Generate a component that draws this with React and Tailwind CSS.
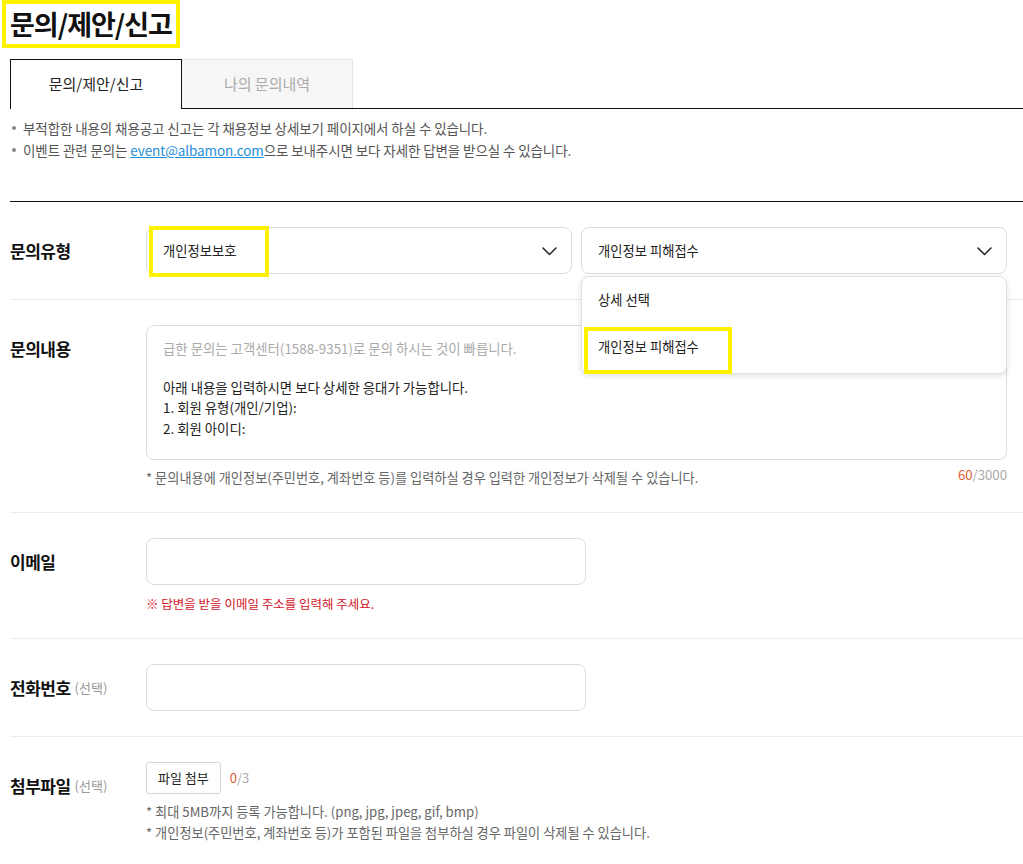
import { useState } from "react";

const FONT = { fontFamily: '"Noto Sans CJK KR", "Noto Sans", sans-serif' };

function Chevron() {
  return (
    <svg width="17" height="16" viewBox="0 0 17 16" fill="none" className="shrink-0">
      <path d="M2 5l6.5 6.5L15 5" stroke="#222" strokeWidth="1.5" strokeLinecap="round" strokeLinejoin="round" />
    </svg>
  );
}

function Label({ children, optional }) {
  return (
    <div className="w-[136px] shrink-0 h-[47px] flex items-center">
      <span className="text-[17px] font-bold text-[#111] tracking-[-0.5px]">{children}</span>
      {optional && <span className="ml-1 text-[13px] text-[#999]">(선택)</span>}
    </div>
  );
}

function Row({ children, last }) {
  return (
    <div className={"flex pt-[25px] " + (last ? "pb-4" : "pb-[25px] border-b border-[#ececec]")}>
      {children}
    </div>
  );
}

export default function App() {
  const [tab] = useState(0);

  return (
    <div className="bg-white min-h-[864px] pl-[10px] text-[#222]" style={FONT}>
      {/* title */}
      <div className="-ml-2">
        <h1 className="inline-block border-[4px] border-[#fff200] px-[4px] pt-[2px] pb-[3px] text-[27px] leading-[35px] font-bold tracking-[-1px] text-[#111]">
          문의/제안/신고
        </h1>
      </div>

      {/* tabs */}
      <div className="flex mt-[11px] h-[50px]">
        <div className={"w-[172px] flex items-center justify-center text-[15px] " + (tab === 0 ? "border border-b-0 border-[#111] bg-white text-[#222]" : "")}>
          문의/제안/신고
        </div>
        <div className="flex-1 flex flex-col">
          <div className="flex-1 flex">
            <div className="w-[171px] flex items-center justify-center text-[15px] text-[#aaa] bg-[#f6f6f6] border border-b-0 border-l-0 border-[#e5e5e5]">
              나의 문의내역
            </div>
          </div>
          <div className="h-px bg-[#111]" />
        </div>
      </div>

      {/* notices */}
      <ul className="mt-[8px] text-[13.5px] leading-[22px] text-[#555] tracking-[-0.1px]">
        <li className="flex items-center">
          <span className="w-[4px] h-[4px] rounded-full bg-[#888] ml-[2px] mr-[7px]" />
          부적합한 내용의 채용공고 신고는 각 채용정보 상세보기 페이지에서 하실 수 있습니다.
        </li>
        <li className="flex items-center">
          <span className="w-[4px] h-[4px] rounded-full bg-[#888] ml-[2px] mr-[7px]" />
          이벤트 관련 문의는&nbsp;<a className="text-[#1e8fd8] underline">event@albamon.com</a>으로 보내주시면 보다 자세한 답변을 받으실 수 있습니다.
        </li>
      </ul>

      <div className="mt-[40px] h-px bg-[#111]" />

      {/* 문의유형 */}
      <Row>
        <Label>문의유형</Label>
        <div className="flex gap-[9px]">
          <div className="relative w-[426px] h-[47px] rounded-[8px] border border-[#dcdcdc] flex items-center justify-between pl-4 pr-[13px]">
            <span className="text-[13.3px]">개인정보보호</span>
            <Chevron />
            <div className="absolute left-[2px] top-[-2px] w-[120px] h-[51px] border-[4px] border-[#fff200]" />
          </div>
          <div className="relative w-[426px] h-[47px] rounded-[8px] border border-[#dcdcdc] flex items-center justify-between pl-4 pr-[13px]">
            <span className="text-[13.3px]">개인정보 피해접수</span>
            <Chevron />
            <div className="absolute left-[-1px] right-[-1px] top-[48px] z-10 bg-white rounded-[8px] border border-[#e2e2e2] shadow-[0_2px_6px_rgba(0,0,0,0.12)] text-[13.3px]">
              <div className="h-[46px] flex items-center pl-4">상세 선택</div>
              <div className="h-[50px] flex items-center pl-4 pb-[2px] relative">
                개인정보 피해접수
                <div className="absolute left-[2px] top-[4px] w-[148px] h-[47px] border-[4px] border-[#fff200]" />
              </div>
            </div>
          </div>
        </div>
      </Row>

      {/* 문의내용 */}
      <Row>
        <Label>문의내용</Label>
        <div className="w-[861px]">
          <div className="h-[135px] rounded-[8px] border border-[#dcdcdc] px-4 pt-[12px] text-[13.4px] leading-[20.5px]">
            <p className="text-[#aaa]">급한 문의는 고객센터(1588-9351)로 문의 하시는 것이 빠릅니다.</p>
            <p className="mt-[18px]">아래 내용을 입력하시면 보다 상세한 응대가 가능합니다.</p>
            <p>1. 회원 유형(개인/기업):</p>
            <p>2. 회원 아이디:</p>
          </div>
          <div className="flex justify-between mt-[9px] text-[13.2px] leading-[18px] text-[#666]">
            <span>* 문의내용에 개인정보(주민번호, 계좌번호 등)를 입력하실 경우 입력한 개인정보가 삭제될 수 있습니다.</span>
            <span className="text-[#aaa] -mt-[3px]"><span className="text-[#e0603a]">60</span>/3000</span>
          </div>
        </div>
      </Row>

      {/* 이메일 */}
      <Row>
        <Label>이메일</Label>
        <div>
          <div className="w-[440px] h-[47px] rounded-[8px] border border-[#dcdcdc]" />
          <p className="mt-[10px] text-[12.5px] leading-[18px] text-[#d4162a]">※ 답변을 받을 이메일 주소를 입력해 주세요.</p>
        </div>
      </Row>

      {/* 전화번호 */}
      <Row>
        <Label optional>전화번호</Label>
        <div className="w-[440px] h-[47px] rounded-[8px] border border-[#dcdcdc]" />
      </Row>

      {/* 첨부파일 */}
      <Row last>
        <Label optional>첨부파일</Label>
        <div>
          <div className="flex items-center">
            <button className="h-[32px] px-[11px] rounded-[3px] border border-[#d5d5d5] text-[13px] text-[#222] bg-white">파일 첨부</button>
            <span className="ml-[9px] text-[13px] text-[#aaa]"><span className="text-[#e0603a]">0</span>/3</span>
          </div>
          <div className="mt-[7px] text-[13.2px] leading-[21px] text-[#666]">
            <p>* 최대 5MB까지 등록 가능합니다. (png, jpg, jpeg, gif, bmp)</p>
            <p>* 개인정보(주민번호, 계좌번호 등)가 포함된 파일을 첨부하실 경우 파일이 삭제될 수 있습니다.</p>
          </div>
        </div>
      </Row>
    </div>
  );
}
